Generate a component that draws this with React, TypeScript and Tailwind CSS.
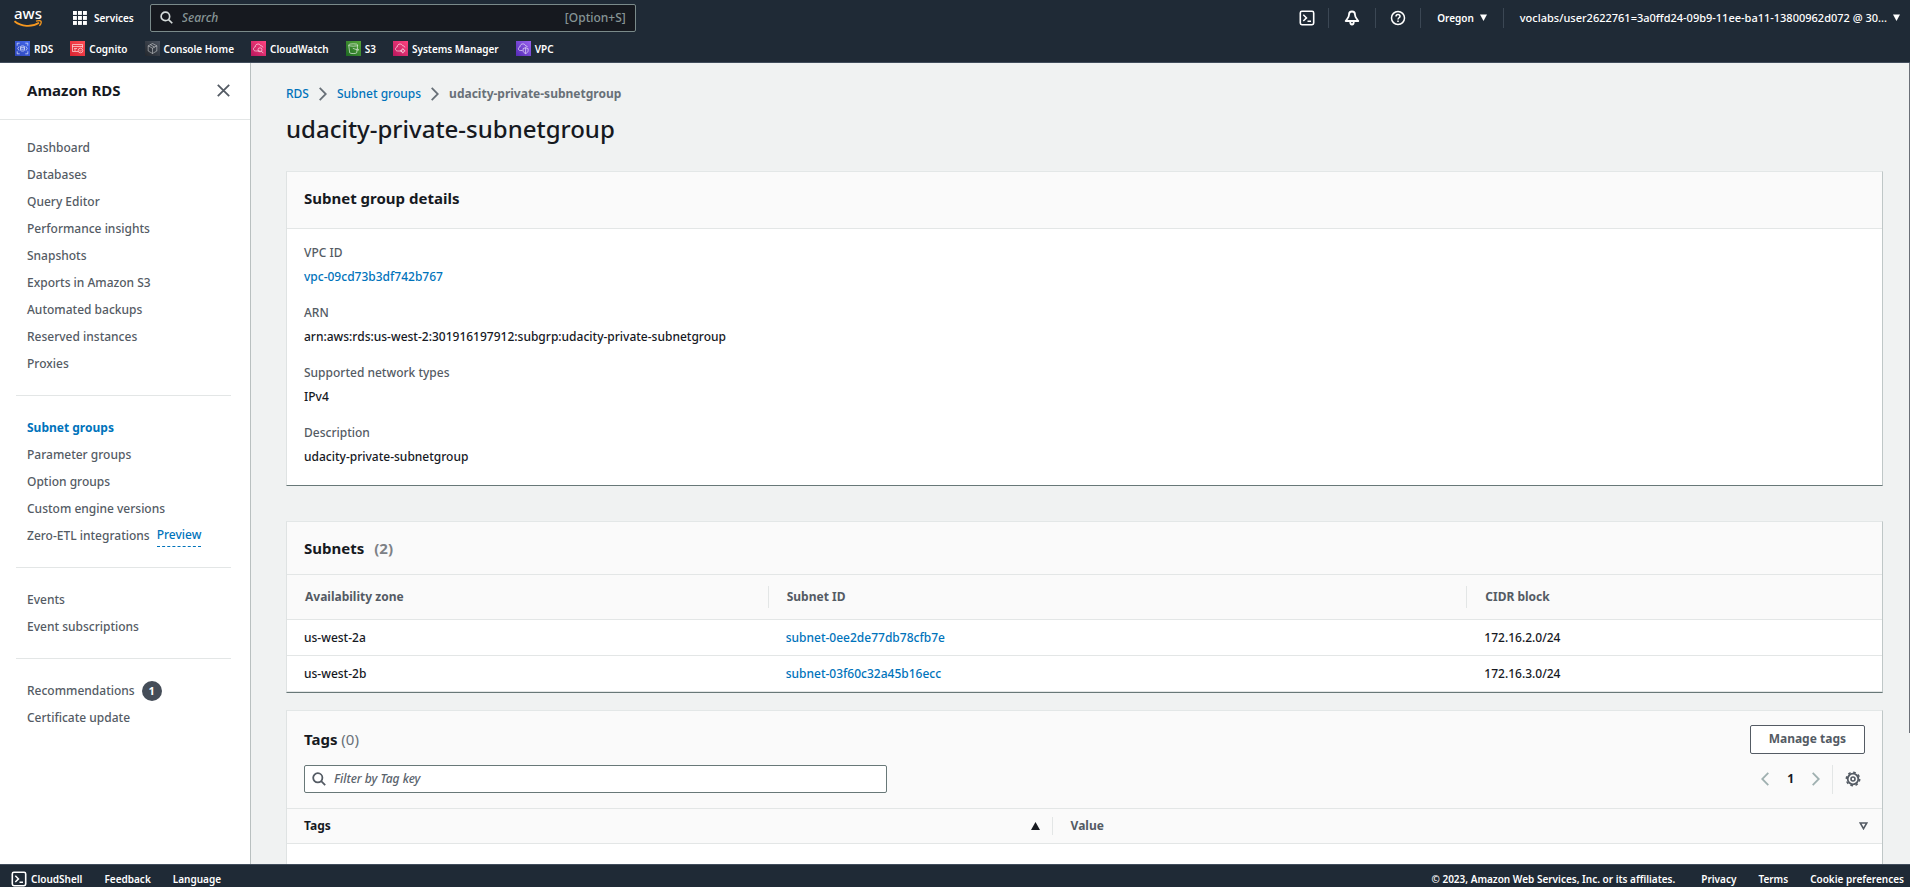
import type { ReactNode } from "react";

function Divider() {
  return <span className="h-5 w-px shrink-0 bg-[#3b4754]" />;
}

function AwsLogo() {
  return (
    <span className="flex w-7 flex-col items-center" aria-label="AWS">
      <span className="text-[15px] leading-[13px] font-medium text-white">aws</span>
      <svg viewBox="0 0 28 8" className="h-2 w-7" fill="none" stroke="#f7981f" aria-hidden="true">
        <path d="M0.5 1.2C7 6.8 18 7.4 25 2.8" strokeWidth="1.7" />
        <path d="M22 1.2c2-.6 4.400-.6 5 0 .4.8-.3 3.200-1.600 4.600" strokeWidth="1.300" />
      </svg>
    </span>
  );
}

function GridIcon() {
  const cells = [0, 5, 10];
  return (
    <svg viewBox="0 0 14 14" className="size-[14px]" fill="#fff" aria-hidden="true">
      {cells.map((y) => cells.map((x) => <rect key={`${x}-${y}`} x={x} y={y} width="3.900" height="3.900" />))}
    </svg>
  );
}

function SearchIcon({ className }: { className: string }) {
  return (
    <svg viewBox="0 0 14 14" className={className} fill="none" stroke="currentColor" strokeWidth="1.800" aria-hidden="true">
      <circle cx="5.800" cy="5.800" r="4.600" />
      <path d="M9.200 9.200l4 4" />
    </svg>
  );
}

function ShellIcon() {
  return (
    <svg viewBox="0 0 16 16" className="size-4" fill="none" stroke="#fff" strokeWidth="1.600" aria-hidden="true">
      <rect x="1.300" y="1.300" width="13.400" height="13.400" rx="1.600" />
      <path d="M4.300 4.800l3.200 3.100-3.200 3.100M8.500 11.300h3.500" strokeWidth="1.500" />
    </svg>
  );
}

function BellIcon() {
  return (
    <svg viewBox="0 0 16 16" className="size-4" fill="none" stroke="#fff" strokeWidth="1.800" strokeLinejoin="round" aria-hidden="true">
      <path d="M8 1.500c-1.900 0-3 1.400-3 3.200 0 2.700-1.700 3.700-3.300 6.300h12.600c-1.600-2.600-3.300-3.600-3.300-6.300 0-1.800-1.100-3.200-3-3.200z" />
      <path d="M6.200 11.500c0 2.200.8 3 1.800 3s1.800-.8 1.800-3" />
    </svg>
  );
}

function HelpIcon() {
  return (
    <svg viewBox="0 0 16 16" className="size-4" fill="none" stroke="#fff" strokeWidth="1.500" aria-hidden="true">
      <circle cx="8" cy="8" r="6.500" />
      <path d="M6 6.600c0-1.300.8-2 2-2s2 .8 2 1.800c0 1.300-2 1.500-2 3.100M8 10.500v1.400" />
    </svg>
  );
}

function Caret() {
  return (
    <svg viewBox="0 0 7 7" className="size-[7px]" fill="#fff" aria-hidden="true">
      <path d="M0 .5h7L3.500 7z" />
    </svg>
  );
}

function Chevron({ className, left = false }: { className: string; left?: boolean }) {
  return (
    <svg viewBox="0 0 8 14" className={className} fill="none" stroke="currentColor" strokeWidth="1.800" aria-hidden="true">
      <path d={left ? "M7.300.8L1.200 7l6.100 6.200" : "M.7.8L6.800 7 .7 13.200"} />
    </svg>
  );
}

const cloud = "M9.500 10H4.600C3.200 10 2.500 9 2.500 8c0-1.200.8-1.900 1.700-2 .1-2 1.400-3 2.900-3 1.400 0 2.300.8 2.700 1.900 1.300-.1 2 .7 2.100 1.600";

const favorites: { name: string; tile: string; art: ReactNode }[] = [
  {
    name: "RDS",
    tile: "bg-linear-to-tr from-[#2e46b8] to-[#4468ee]",
    art: (
      <>
        <path d="M2.200 4.700V2.200h2.500M10.300 2.200h2.500v2.500M12.800 10.300v2.500h-2.500M4.700 12.800H2.200v-2.500M4 5.500L2.800 7.500 4 9.500M11 5.500l1.200 2L11 9.500" />
        <ellipse cx="7.500" cy="5.700" rx="2" ry=".8" />
        <path d="M5.500 5.700v3.600c0 1 4 1 4 0V5.700M5.500 7.500c0 1 4 1 4 0" />
      </>
    ),
  },
  {
    name: "Cognito",
    tile: "bg-linear-to-tr from-[#d92231] to-[#ff4c55]",
    art: (
      <>
        <path d="M8 10.500H2.500v-7h10v3.300M2.500 5.500h10M4 7.500h3M4 9h2" />
        <circle cx="10.500" cy="9.500" r="2.300" />
        <path d="M9.500 9.500l.8.800 1.300-1.500" />
      </>
    ),
  },
  {
    name: "Console Home",
    tile: "bg-linear-to-tr from-[#23272d] to-[#4c5461]",
    art: <path strokeOpacity=".55" d="M7.500 2.500l4.300 2.300v5.200l-4.300 2.500L3.200 10V4.800zM3.200 4.800l4.300 2.400 4.300-2.400M7.500 7.200v5.300M5.300 3.700l4.300 2.400" />,
  },
  {
    name: "CloudWatch",
    tile: "bg-linear-to-tr from-[#b8165d] to-[#ff4380]",
    art: (
      <>
        <path d={cloud} />
        <circle cx="9" cy="8.800" r="2" />
        <path d="M10.400 10.200l2 2" />
      </>
    ),
  },
  {
    name: "S3",
    tile: "bg-linear-to-tr from-[#1c6922] to-[#57a83a]",
    art: (
      <>
        <ellipse cx="7.200" cy="4" rx="4.500" ry="1.200" />
        <path d="M2.700 4l1 7.800c.4 1 6.600 1 7 0l1-7.800M6.800 7.300l5.300 1.900c.9.200.7-.8-.6-1.500" />
      </>
    ),
  },
  {
    name: "Systems Manager",
    tile: "bg-linear-to-tr from-[#b8165d] to-[#ff4380]",
    art: (
      <>
        <path d={cloud} />
        <circle cx="9.800" cy="9.800" r="1.600" />
        <path d="M9.800 7.300v1M9.800 11.300v1M7.300 9.800h1M11.300 9.800h1" />
      </>
    ),
  },
  {
    name: "VPC",
    tile: "bg-linear-to-tr from-[#5529b5] to-[#9b62f0]",
    art: (
      <>
        <path d="M6.500 9.500H4.300C3 9.500 2.400 8.700 2.400 7.800c0-1.200.8-1.800 1.600-1.900.1-2 1.400-3 2.900-3 1.400 0 2.300.8 2.700 1.900 1 0 1.600.5 1.900 1.200" />
        <path d="M9.600 6.700l2.500.9v2c0 1.500-1.200 2.400-2.500 3-1.300-.6-2.500-1.500-2.500-3v-2zM9.600 6.700v5.900" />
      </>
    ),
  },
];

function Header() {
  return (
    <header className="shrink-0 border-b border-[#414d5c] bg-[#1f2a36] text-[10px] font-semibold text-white">
      <div className="flex h-[35px] items-center pr-[10px] pl-[14px]">
        <a href="#home"><AwsLogo /></a>
        <div className="ml-4"><Divider /></div>
        <button type="button" className="ml-[15px] flex items-center gap-[7px]">
          <GridIcon />
          Services
        </button>
        <label className="ml-4 flex h-7 w-[486px] items-center rounded-xs border border-[#7a8a8a] bg-[#16191f] px-[9px]">
          <SearchIcon className="size-[13px] text-[#d5dbdb]" />
          <input type="search" aria-label="Search" placeholder="Search" className="ml-[9px] min-w-0 grow bg-transparent text-[12px] font-medium outline-none placeholder:text-[#879596] placeholder:italic" />
          <span className="text-[12px] font-medium text-[#879596]">[Option+S]</span>
        </label>
        <div className="ml-auto flex items-center">
          <button type="button" aria-label="CloudShell" className="mr-[13px]"><ShellIcon /></button>
          <Divider />
          <button type="button" aria-label="Notifications" className="mx-[15px]"><BellIcon /></button>
          <Divider />
          <button type="button" aria-label="Help" className="mx-[14px]"><HelpIcon /></button>
          <Divider />
          <button type="button" className="mx-4 flex items-center gap-[6px]">Oregon <Caret /></button>
          <Divider />
          <button type="button" className="ml-4 flex items-center gap-[6px] text-[11px] font-medium">
            voclabs/user2622761=3a0ffd24-09b9-11ee-ba11-13800962d072 @ 30... <Caret />
          </button>
        </div>
      </div>
      <nav aria-label="Favorites" className="flex h-[27px] items-center gap-[17px] pl-[15px]">
        {favorites.map((f) => (
          <a key={f.name} href="#service" className="flex items-center gap-1">
            <span className={`size-[15px] ${f.tile}`}>
              <svg viewBox="0 0 15 15" className="size-[15px]" fill="none" stroke="#fff" strokeOpacity=".75" strokeWidth=".8" aria-hidden="true">
                {f.art}
              </svg>
            </span>
            {f.name}
          </a>
        ))}
      </nav>
    </header>
  );
}

const navGroups = [
  ["Dashboard", "Databases", "Query Editor", "Performance insights", "Snapshots", "Exports in Amazon S3", "Automated backups", "Reserved instances", "Proxies"],
  ["Subnet groups", "Parameter groups", "Option groups", "Custom engine versions", "Zero-ETL integrations"],
  ["Events", "Event subscriptions"],
  ["Recommendations", "Certificate update"],
];

function Sidebar() {
  return (
    <aside className="w-[251px] shrink-0 border-r border-[#b9c0c0] bg-white">
      <div className="flex h-[57px] items-center justify-between border-b border-[#e3e6e6] pr-5 pb-[2px] pl-[27px]">
        <h2 className="text-[15px] font-bold text-[#16191f]">Amazon RDS</h2>
        <button type="button" aria-label="Close navigation">
          <svg viewBox="0 0 13 13" className="size-[13px]" fill="none" stroke="#545b64" strokeWidth="1.800" aria-hidden="true">
            <path d="M.8.8l11.400 11.400M12.200.8L.8 12.200" />
          </svg>
        </button>
      </div>
      <nav aria-label="Amazon RDS" className="pt-[14px] pr-[19px] pl-4">
        {navGroups.map((group, i) => (
          <ul key={i} className="border-b border-[#e3e6e6] pt-[18px] pb-[18px] pl-[11px] first:pt-0 last:border-0">
            {group.map((item) => (
              <li key={item} className="flex h-[27px] items-center">
                <a href="#nav" className={item === "Subnet groups" ? "font-bold text-[#0073bb]" : "text-[#545b64]"}>{item}</a>
                {item === "Zero-ETL integrations" && (
                  <button type="button" className="ml-[7px] h-[22px] border-b border-dashed border-[#0073bb] font-medium text-[#0073bb]">Preview</button>
                )}
                {item === "Recommendations" && (
                  <span className="ml-[7px] flex size-5 items-center justify-center rounded-full bg-[#454d58] text-[11px] font-bold text-white">1</span>
                )}
              </li>
            ))}
          </ul>
        ))}
      </nav>
    </aside>
  );
}

const details = [
  { label: "VPC ID", value: "vpc-09cd73b3df742b767", link: true },
  { label: "ARN", value: "arn:aws:rds:us-west-2:301916197912:subgrp:udacity-private-subnetgroup" },
  { label: "Supported network types", value: "IPv4" },
  { label: "Description", value: "udacity-private-subnetgroup" },
];

const subnets = [
  { zone: "us-west-2a", id: "subnet-0ee2de77db78cfb7e", cidr: "172.16.2.0/24" },
  { zone: "us-west-2b", id: "subnet-03f60c32a45b16ecc", cidr: "172.16.3.0/24" },
];

const card = "border border-t-[#e3e7e7] border-r-[#bfc7c7] border-b-[#687878] border-l-[#dfe3e3] bg-white";

function Details() {
  return (
    <section className={`mt-[26px] ${card}`}>
      <h2 className="flex h-[57px] items-center border-b border-[#e3e6e6] bg-[#fafafa] px-[17px] pb-1 text-[15px] font-bold">Subnet group details</h2>
      <dl className="grid gap-3 px-[17px] pt-[12px] pb-4">
        {details.map((d) => (
          <div key={d.label} className="leading-6">
            <dt className="text-[#545b64]">{d.label}</dt>
            <dd>{d.link ? <a href="#vpc" className="text-[#0073bb]">{d.value}</a> : d.value}</dd>
          </div>
        ))}
      </dl>
    </section>
  );
}

function Subnets() {
  const th = "px-[18px] text-left font-bold";
  return (
    <section className={`mt-[35px] ${card}`}>
      <h2 className="flex h-[53px] items-center gap-[10px] border-b border-[#e3e6e6] bg-[#fafafa] px-[17px] text-[15px] font-bold">
        Subnets <span className="text-[#7d8186]">(2)</span>
      </h2>
      <table className="w-full table-fixed border-collapse">
        <colgroup>
          <col className="w-[30.200%]" />
          <col className="w-[43.800%]" />
          <col />
        </colgroup>
        <thead className="bg-[#fafafa] text-[#545b64]">
          <tr className="h-11 border-b border-[#e3e6e6]">
            <th scope="col"><div className={`border-r border-[#e3e6e6] py-[2px] ${th}`}>Availability zone</div></th>
            <th scope="col"><div className={`border-r border-[#e3e6e6] py-[2px] ${th}`}>Subnet ID</div></th>
            <th scope="col"><div className={th}>CIDR block</div></th>
          </tr>
        </thead>
        <tbody>
          {subnets.map((s) => (
            <tr key={s.id} className="h-9 border-b border-[#e3e6e6]">
              <td className="px-[17px] pt-[2px]">{s.zone}</td>
              <td className="px-[17px] pt-[2px]"><a href="#subnet" className="text-[#0073bb]">{s.id}</a></td>
              <td className="px-[17px] pt-[2px]">{s.cidr}</td>
            </tr>
          ))}
        </tbody>
      </table>
    </section>
  );
}

function GearIcon() {
  return (
    <svg viewBox="0 0 16 16" className="size-4" fill="none" stroke="#545b64" aria-hidden="true">
      <circle cx="8" cy="8" r="5.300" strokeWidth="1.800" />
      <circle cx="8" cy="8" r="6.700" strokeWidth="1.500" strokeDasharray="2.600 2.662" />
      <circle cx="8" cy="8" r="2" strokeWidth="1.600" />
    </svg>
  );
}

function Tags() {
  return (
    <section className={`mt-[17px] ${card}`}>
      <div className="border-b border-[#e3e6e6] bg-[#fafafa] px-[17px] pt-[14px] pb-[14px]">
        <div className="flex h-[29px] items-center justify-between">
          <h2 className="text-[15px] font-bold">Tags <span className="font-normal text-[#687078]">(0)</span></h2>
          <button type="button" className="h-[29px] rounded-xs border border-[#545b64] bg-white px-[18px] font-bold text-[#545b64]">Manage tags</button>
        </div>
        <div className="mt-[11px] flex h-[29px] items-center justify-between">
          <label className="flex h-7 w-[583px] items-center gap-2 rounded-xs border border-[#687878] bg-white px-[7px]">
            <SearchIcon className="size-[14px] text-[#545b64]" />
            <input type="search" aria-label="Filter by Tag key" placeholder="Filter by Tag key" className="min-w-0 grow outline-none placeholder:text-[#5a636c] placeholder:italic" />
          </label>
          <div className="flex items-center pr-1">
            <button type="button" aria-label="Previous page"><Chevron left className="h-[14px] w-2 text-[#9fb0b0]" /></button>
            <button type="button" className="mx-[18px] font-bold">1</button>
            <button type="button" aria-label="Next page"><Chevron className="h-[14px] w-2 text-[#9fb0b0]" /></button>
            <span className="mx-3 h-[29px] w-px bg-[#e3e6e6]" />
            <button type="button" aria-label="Preferences"><GearIcon /></button>
          </div>
        </div>
      </div>
      <table className="w-full table-fixed border-collapse">
        <colgroup>
          <col className="w-[48%]" />
          <col />
        </colgroup>
        <thead className="bg-[#fafafa]">
          <tr className="h-[35px] border-b border-[#e3e6e6]">
            <th scope="col">
              <div className="flex items-center justify-between border-r border-[#e3e6e6] pr-3 pl-[17px] font-bold">
                Tags
                <svg viewBox="0 0 9 8" className="h-2 w-[9px]" fill="#16191f" aria-hidden="true"><path d="M4.500 0L9 8H0z" /></svg>
              </div>
            </th>
            <th scope="col">
              <div className="flex items-center justify-between pr-[14px] pl-[18px] font-bold text-[#545b64]">
                Value
                <svg viewBox="0 0 9 8" className="h-2 w-[9px]" fill="none" stroke="#545b64" strokeWidth="1.600" aria-hidden="true"><path d="M1.200 1h6.600L4.500 6.700z" /></svg>
              </div>
            </th>
          </tr>
        </thead>
        <tbody>
          <tr className="h-40"><td colSpan={2} /></tr>
        </tbody>
      </table>
    </section>
  );
}

function Footer() {
  return (
    <footer className="flex h-[23px] shrink-0 items-center border-t border-[#414d5c] bg-[#1f2a36] pt-[5px] pr-[6px] pl-[11px] text-[10px] font-semibold text-white">
      <button type="button" className="flex items-center gap-1"><ShellIcon />CloudShell</button>
      <a href="#feedback" className="ml-[22px]">Feedback</a>
      <button type="button" className="ml-[22px]">Language</button>
      <span className="ml-auto">© 2023, Amazon Web Services, Inc. or its affiliates.</span>
      <a href="#privacy" className="ml-[26px]">Privacy</a>
      <a href="#terms" className="ml-[22px]">Terms</a>
      <a href="#cookies" className="ml-[22px]">Cookie preferences</a>
    </footer>
  );
}

export default function App() {
  return (
    <div className="flex h-screen flex-col overflow-hidden bg-[#f0f2f2] font-['Noto_Sans',sans-serif] text-[12px] leading-[18px] font-medium text-[#16191f]">
      <Header />
      <div className="flex min-h-0 grow">
        <Sidebar />
        <main className="relative min-w-0 grow overflow-hidden pr-[27px] pl-[35px]">
          <nav aria-label="Breadcrumb" className="mt-[22px] flex items-center gap-[10px]">
            <a href="#rds" className="text-[#0073bb]">RDS</a>
            <Chevron className="h-[14px] w-2 text-[#687078]" />
            <a href="#groups" className="text-[#0073bb]">Subnet groups</a>
            <Chevron className="h-[14px] w-2 text-[#687078]" />
            <span className="font-bold text-[#687078]">udacity-private-subnetgroup</span>
          </nav>
          <h1 className="mt-[10px] text-[24px] leading-8 font-medium">udacity-private-subnetgroup</h1>
          <Details />
          <Subnets />
          <Tags />
          <span className="absolute top-0 right-0 h-[670px] w-px bg-[#6b7078]" />
        </main>
      </div>
      <Footer />
    </div>
  );
}
